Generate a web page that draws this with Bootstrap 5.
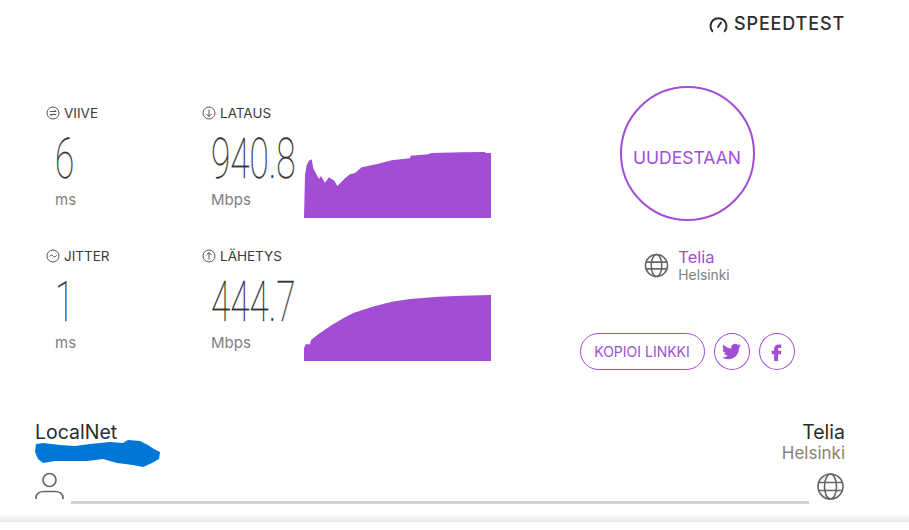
<!DOCTYPE html>
<html lang="fi">
<head>
  <meta charset="UTF-8" />
  <title>Speedtest</title>
  <link rel="stylesheet" href="https://cdn.jsdelivr.net/npm/bootstrap@5.3.3/dist/css/bootstrap.min.css">
  <style>
    body { font-family: "Inter", "Open Sans", sans-serif; background: #fff; color: #333; overflow: hidden; }
    .st-page { width: 909px; height: 530px; position: relative; }
    .st-top { height: 86px; padding: 14px 64px 0 0; }
    .st-logo { font-size: 18px; font-weight: 500; color: #2d2d2d; letter-spacing: .85px; line-height: 20px; gap: 6px; height: 20px; }
    .st-metrics { width: 547px; padding: 18px 0 0 46px; }
    .st-metric-row { height: 143px; }
    .st-col-ping { width: 156px; }
    .st-label { font-size: 13.5px; font-weight: 400; color: #3a3a3a; line-height: 18px; gap: 4px; }
    .st-label svg { width: 14px; height: 14px; }
    .st-num { font-family: "Roboto", sans-serif; font-weight: 100; font-size: 55px; line-height: 56px; color: #333; height: 56px; margin: 9px 0 0 9px; transform: scaleX(.64); transform-origin: left center; white-space: nowrap; -webkit-text-stroke: .3px #333; }
    .st-unit { font-size: 15px; color: #808080; line-height: 20px; margin: 3px 0 0 9px; }
    .st-speed { width: 289px; }
    .st-readout { width: 102px; flex: none; }
    .st-plot { display: block; margin-top: 30px; flex: none; }
    .st-side { width: 280px; }
    .st-go { width: 135px; height: 135px; border: 2px solid #a24dd6; border-radius: 50%; color: #a24dd6; font-size: 17.5px; background: #fff; padding: 10px 0 0; }
    .st-isp { margin-top: 27px; gap: 9px; height: 34px; }
    .st-isp svg { width: 25px; height: 25px; }
    .st-isp-name { color: #a24dd6; font-size: 16.5px; line-height: 20px; }
    .st-isp-city { color: #808080; font-size: 13.8px; line-height: 16px; }
    .st-share { margin-top: 51px; gap: 9px; }
    .st-pill { height: 37px; border: 1px solid #a24dd6; border-radius: 19px; color: #a24dd6; background: #fff; font-size: 14px; padding: 0; width: 125px; white-space: nowrap; }
    .st-round { width: 36px; height: 37px; padding: 0; border-radius: 50%; }
    .st-round svg { width: 19px; height: 19px; fill: #a24dd6; }
    .st-foot { position: absolute; left: 35px; right: 64px; top: 421px; }
    .st-host { font-size: 19.5px; line-height: 22px; color: #2b2b2b; font-weight: 400; }
    .st-city { font-size: 17px; line-height: 20px; color: #8a8074; }
    .st-scribble { display: block; width: 125px; height: 28px; margin-top: -3px; }
    .st-tools { margin-top: 4px; }
    .st-track { height: 3px; background: #d2d2d2; margin: 29px 7px 0 7px; }
    .st-ico { width: 29px; height: 29px; flex: none; }
    .st-fade { height: 9px; background: linear-gradient(#fff, #e9e9e9); position: absolute; left: 0; right: 0; top: 513px; }
  </style>
</head>
<body>
<div class="st-page">
  <!-- logo -->
  <div class="st-top d-flex justify-content-end align-items-start">
    <div class="st-logo d-flex align-items-center">
      <svg width="19" height="17" viewBox="0 0 19 17" fill="none" stroke="#2d2d2d" stroke-width="2" stroke-linecap="round"><path d="M3.300 15.200A8 8 0 1 1 15.700 15.200"/><path d="M9 11l3-4.500"/></svg>
      <span>SPEEDTEST</span>
    </div>
  </div>

  <div class="d-flex">
    <!-- results -->
    <div class="st-metrics">
      <div class="st-metric-row d-flex">
        <div class="st-col-ping">
          <div class="st-label d-flex align-items-center">
            <svg viewBox="0 0 14 14" fill="none" stroke="#555" stroke-width="1"><circle cx="7" cy="7" r="6"/><path d="M3.800 5.500h6.200L8.400 3.900M10.200 8.500H4L5.600 10.100"/></svg>
            <span>VIIVE</span>
          </div>
          <div class="st-num">6</div>
          <div class="st-unit">ms</div>
        </div>
        <div class="st-speed">
          <div class="st-label d-flex align-items-center">
            <svg viewBox="0 0 14 14" fill="none" stroke="#555" stroke-width="1"><circle cx="7" cy="7" r="6"/><path d="M7 3.500v7M4.300 7.800 7 10.500l2.700-2.700"/></svg>
            <span>LATAUS</span>
          </div>
          <div class="d-flex align-items-start">
            <div class="st-readout">
              <div class="st-num">940.8</div>
              <div class="st-unit">Mbps</div>
            </div>
            <svg class="st-plot" width="187" height="66" viewBox="0 0 187 66"><path fill="#a24dd6" d="M0 66 1 23 2.700 13 5 8.700 7.700 7.300 9.300 16.300 12.700 23 15 27 17 24 21 30.700 25 25.300 30.300 28.700 33.300 34 41 26.300 46 22.300 51 21 57.700 15.300 74.300 11.700 87.700 8.300 106 6.300 106.700 3.700 124 2.300 127.700 1 157.700 .3 181 0 181.700 1 187 1V66z"/></svg>
          </div>
        </div>
      </div>
      <div class="st-metric-row d-flex">
        <div class="st-col-ping">
          <div class="st-label d-flex align-items-center">
            <svg viewBox="0 0 14 14" fill="none" stroke="#555" stroke-width="1"><circle cx="7" cy="7" r="6"/><path d="M3.600 7.600C4.600 5.600 6 5.600 7 7s2.400 1.400 3.400-.6"/></svg>
            <span>JITTER</span>
          </div>
          <div class="st-num">1</div>
          <div class="st-unit">ms</div>
        </div>
        <div class="st-speed">
          <div class="st-label d-flex align-items-center">
            <svg viewBox="0 0 14 14" fill="none" stroke="#555" stroke-width="1"><circle cx="7" cy="7" r="6"/><path d="M7 10.500v-7M4.300 6.200 7 3.500l2.700 2.700"/></svg>
            <span>LÄHETYS</span>
          </div>
          <div class="d-flex align-items-start">
            <div class="st-readout">
              <div class="st-num">444.7</div>
              <div class="st-unit">Mbps</div>
            </div>
            <svg class="st-plot" width="187" height="66" viewBox="0 0 187 66"><path fill="#a24dd6" d="M0 66V53.300L1.700 49.300H6L7 45 14.300 39.300 27.700 30 41 22.300 49.300 18 67.700 12 87.700 6.700 106 4 134.300 1.700 157.700 .7 187 0V66z"/></svg>
          </div>
        </div>
      </div>
    </div>

    <!-- start again + server + share -->
    <div class="st-side d-flex flex-column align-items-center">
      <button class="st-go" type="button">UUDESTAAN</button>
      <div class="st-isp d-flex align-items-center">
        <svg viewBox="0 0 26 26" fill="none" stroke="#666" stroke-width="1.6"><circle cx="13" cy="13" r="11.500"/><ellipse cx="13" cy="13" rx="5.500" ry="11.500"/><path d="M2 9.500h22M2 16.500h22"/></svg>
        <div>
          <div class="st-isp-name">Telia</div>
          <div class="st-isp-city">Helsinki</div>
        </div>
      </div>
      <div class="st-share d-flex">
        <button class="st-pill" type="button">KOPIOI LINKKI</button>
        <button class="st-pill st-round d-flex align-items-center justify-content-center" type="button" aria-label="Twitter">
          <svg viewBox="0 0 24 24"><path d="M23.953 4.570a10 10 0 0 1-2.825.775 4.958 4.958 0 0 0 2.163-2.723c-.951.555-2.005.959-3.127 1.184a4.920 4.920 0 0 0-8.384 4.482C7.690 8.095 4.067 6.130 1.640 3.162a4.822 4.822 0 0 0-.666 2.475c0 1.710.870 3.213 2.188 4.096a4.904 4.904 0 0 1-2.228-.616v.060a4.923 4.923 0 0 0 3.946 4.827 4.996 4.996 0 0 1-2.212.085 4.936 4.936 0 0 0 4.604 3.417 9.867 9.867 0 0 1-6.102 2.105c-.390 0-.779-.023-1.170-.067a13.995 13.995 0 0 0 7.557 2.209c9.053 0 13.998-7.496 13.998-13.985 0-.210 0-.420-.015-.630A9.935 9.935 0 0 0 24 4.590z"/></svg>
        </button>
        <button class="st-pill st-round d-flex align-items-center justify-content-center" type="button" aria-label="Facebook">
          <svg viewBox="0 0 24 24"><path d="M14.500 7.500h3.500V3h-3.500C11.200 3 9 5.200 9 8.500V11H6v4.500h3V24h5v-8.500h3.500l.7-4.500h-4.200V8.500c0-.550.450-1 1-1z"/></svg>
        </button>
      </div>
    </div>
  </div>

  <!-- client / server bar -->
  <div class="st-foot">
    <div class="d-flex justify-content-between">
      <div>
        <div class="st-host">LocalNet</div>
        <svg class="st-scribble" viewBox="0 0 125 28"><path fill="#0076d6" d="M1 4 8 3 25 5 40 6 55 4 75 2 88 3 93 0 105 1 113 5 119 9 125 12 124 19 117 23 108 27 98 25 82 23 68 19 52 21 35 21 20 21 8 23 3 19 0 12z"/></svg>
      </div>
      <div class="text-end">
        <div class="st-host">Telia</div>
        <div class="st-city">Helsinki</div>
      </div>
    </div>
    <div class="st-tools d-flex align-items-start">
      <svg class="st-ico" viewBox="0 0 29 29" fill="none" stroke="#666" stroke-width="1.700"><circle cx="14.500" cy="8" r="6.500"/><path d="M1 27v-1c0-4.500 4-6.500 8-6.500h11c4 0 8 2 8 6.500v1"/></svg>
      <div class="st-track flex-grow-1"></div>
      <svg class="st-ico" viewBox="0 0 29 29" fill="none" stroke="#666" stroke-width="1.600"><circle cx="14.500" cy="14.500" r="12.500"/><ellipse cx="14.500" cy="14.500" rx="6" ry="12.500"/><path d="M3 10.500h23M3 18.500h23"/></svg>
    </div>
  </div>
  <div class="st-fade"></div>
</div>
<script src="https://cdn.jsdelivr.net/npm/bootstrap@5.3.3/dist/js/bootstrap.bundle.min.js"></script>
</body>
</html>
